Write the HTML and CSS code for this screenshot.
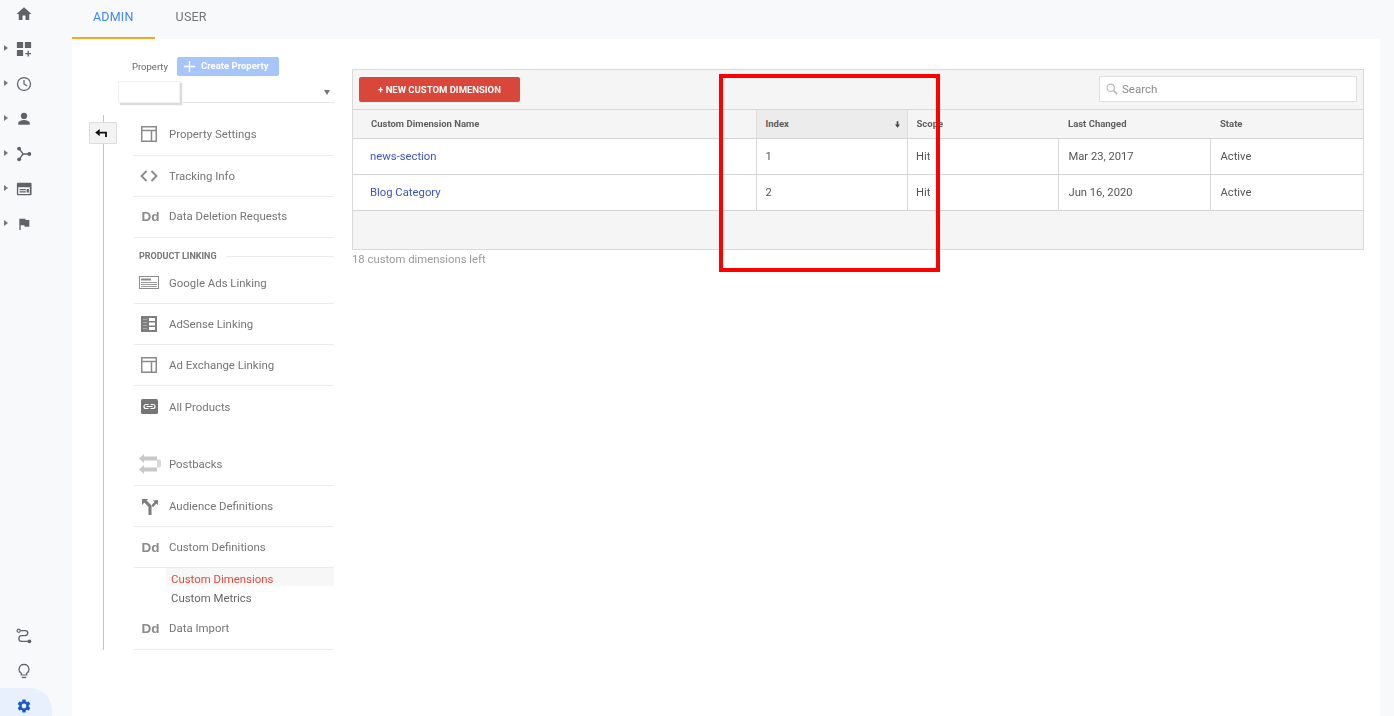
FILE: index.html
```html
<!DOCTYPE html>
<html lang="en">
<head>
<meta charset="utf-8">
<title>Custom Dimensions</title>
<link rel="stylesheet" href="styles.css">
</head>
<body>
<div class="app">
  <aside class="rail">
    <div class="rail-top">
      <div class="rail-row rail-home">
        <svg class="rail-icon" viewBox="0 0 24 24"><path d="M10 20v-6h4v6h5v-8h3L12 3 2 12h3v8z"/></svg>
      </div>
      <div class="rail-row"><span class="caret"></span>
        <svg class="rail-icon" viewBox="0 0 18 18"><path d="M1 1h7v7H1zM10 1h7v7h-7zM1 10h7v7H1zM13 11h1.500v2.500H17V15h-2.500v2.500H13V15h-2.500v-1.500H13z"/></svg>
      </div>
      <div class="rail-row"><span class="caret"></span>
        <svg class="rail-icon" viewBox="0 0 18 18"><circle cx="9" cy="9" r="7.300" fill="none" stroke="#5f6368" stroke-width="1.400"/><path d="M9 4.500V9l3.500 2.300" fill="none" stroke="#5f6368" stroke-width="1.400"/></svg>
      </div>
      <div class="rail-row"><span class="caret"></span>
        <svg class="rail-icon" viewBox="0 0 18 18"><circle cx="9" cy="5.500" r="3.500"/><path d="M2.500 15.500v-2c0-2.500 4.500-3.500 6.500-3.500s6.500 1 6.500 3.500v2z"/></svg>
      </div>
      <div class="rail-row"><span class="caret"></span>
        <svg class="rail-icon" viewBox="0 0 18 18"><circle cx="3.500" cy="3" r="2.200"/><circle cx="3.500" cy="15" r="2.200"/><circle cx="15" cy="9" r="2.200"/><path d="M3.500 3L8 9H15M8 9L3.500 15" fill="none" stroke="#5f6368" stroke-width="1.500"/></svg>
      </div>
      <div class="rail-row"><span class="caret"></span>
        <svg class="rail-icon" viewBox="0 0 18 18"><path fill-rule="evenodd" d="M2 2h14.500a1 1 0 0 1 1 1v12a1 1 0 0 1-1 1H2a1 1 0 0 1-1-1V3a1 1 0 0 1 1-1zM2.500 7v7.500h13V7zM4 9h7v1.500H4zM12 9h2.500v4H12zM4 11.500h7V13H4z"/></svg>
      </div>
      <div class="rail-row"><span class="caret"></span>
        <svg class="rail-icon" viewBox="0 0 24 24"><path d="M14.400 6L14 4H5v17h2v-7h5.600l.4 2h7V6z"/></svg>
      </div>
    </div>
    <div class="rail-bottom">
      <div class="rail-row">
        <svg class="rail-icon" viewBox="0 0 18 18"><circle cx="3" cy="3" r="1.800" fill="none" stroke="#5f6368" stroke-width="1.300"/><circle cx="15" cy="15" r="2.200"/><path d="M5 3h5.500a2.700 2.700 0 0 1 0 5.500h-4a2.700 2.700 0 0 0 0 6.500H13" fill="none" stroke="#5f6368" stroke-width="1.500"/></svg>
      </div>
      <div class="rail-row">
        <svg class="rail-icon" viewBox="0 0 18 18"><path d="M9 1.500a5.500 5.500 0 0 0-3 10.100V13.500h6v-1.900A5.500 5.500 0 0 0 9 1.500z" fill="none" stroke="#5f6368" stroke-width="1.400"/><path d="M6.500 15.500h5V17h-5z"/></svg>
      </div>
      <div class="rail-active">
        <svg class="rail-icon gear" viewBox="0 0 24 24"><path d="M19.140 12.940c.04-.3.060-.61.060-.94 0-.32-.020-.64-.070-.94l2.030-1.580a.49.49 0 0 0 .12-.61l-1.920-3.320a.488.488 0 0 0-.59-.22l-2.390.96c-.5-.38-1.030-.7-1.620-.94l-.36-2.540a.484.484 0 0 0-.48-.41h-3.840c-.24 0-.43.170-.47.410l-.36 2.540c-.59.240-1.130.57-1.620.94l-2.390-.96c-.22-.080-.47 0-.59.220L2.740 8.870c-.12.210-.080.470.12.610l2.030 1.580c-.05.300-.09.630-.09.940s.020.640.070.940l-2.030 1.580a.49.49 0 0 0-.12.610l1.920 3.320c.12.220.370.290.590.220l2.390-.96c.5.380 1.030.7 1.620.94l.36 2.540c.05.240.24.410.48.410h3.840c.24 0 .44-.170.47-.41l.36-2.540c.59-.240 1.130-.56 1.620-.94l2.390.96c.22.080.47 0 .59-.220l1.920-3.320c.12-.220.070-.470-.12-.610l-2.010-1.580zM12 15.600A3.600 3.600 0 1 1 12 8.400a3.600 3.600 0 0 1 0 7.200z"/></svg>
      </div>
    </div>
  </aside>

  <div class="main">
    <nav class="tabs">
      <a class="tab tab-active">ADMIN</a>
      <a class="tab">USER</a>
    </nav>
    <div class="panel">
      <section class="sidebar">
        <div class="prop-row">
          <span class="prop-label">Property</span>
          <span class="prop-btn"><svg class="plus" viewBox="0 0 12 12"><path d="M5.300 0h1.400v5.300H12v1.400H6.700V12H5.300V6.700H0V5.300h5.300z"/></svg>Create Property</span>
        </div>
        <div class="prop-select">
          <span class="redact"></span>
          <span class="select-caret"></span>
        </div>
        <div class="nav-wrap">
          <button class="back" type="button" aria-label="Back"><svg viewBox="0 0 14 10" width="13" height="9"><path d="M5 0L0 4l5 4V5h6v4h2V3H5z"/></svg></button>
          <ul class="nav-list">
            <li class="nav-item nav-up"><span class="nav-icon"><svg viewBox="0 0 16 16" width="16" height="16"><path class="ol" d="M.75.75h14.500v14.500H.75zM.75 4.500h14.500M10.500 4.500v10.750"/></svg></span>Property Settings</li>
            <li class="nav-item"><span class="nav-icon"><svg viewBox="0 0 18 12" width="18" height="12"><path class="ol ol-thick" d="M6.500 1L1.500 6l5 5M11.500 1l5 5-5 5"/></svg></span>Tracking Info</li>
            <li class="nav-item nav-up"><span class="nav-icon nav-dd">Dd</span>Data Deletion Requests</li>
            <li class="nav-heading"><span>PRODUCT LINKING</span></li>
            <li class="nav-item"><span class="nav-icon"><svg viewBox="0 0 20 13" width="20" height="13"><path d="M0 0h20v13H0z" fill="#8a8a8a"/><path d="M1 1h18v11H1z" fill="#fff"/><path d="M2 2.500h10v2H2z" fill="#8a8a8a"/><path d="M2 6h16v1H2zM2 8h16v1H2zM2 10h16v1H2z" fill="#9a9a9a"/></svg></span>Google Ads Linking</li>
            <li class="nav-item"><span class="nav-icon"><svg viewBox="0 0 16 16" width="16" height="16"><path d="M0 0h16v16H0z" fill="#7d7d7d"/><path d="M8 2h6v3H8zM8 6.500h6v3H8zM8 11h6v3H8z" fill="#fff"/><path d="M2 3h4v1H2zM2 6h4v1H2zM2 9h4v1H2zM2 12h4v1H2z" fill="#aaa"/></svg></span>AdSense Linking</li>
            <li class="nav-item"><span class="nav-icon"><svg viewBox="0 0 16 16" width="16" height="16"><path class="ol" d="M.75.75h14.500v14.500H.75zM.75 4.500h14.500M10.500 4.500v10.750"/></svg></span>Ad Exchange Linking</li>
            <li class="nav-item nav-plain"><span class="nav-icon"><svg viewBox="0 0 17 15" width="17" height="15"><rect width="17" height="15" rx="1.500" fill="#757575"/><path d="M7.500 5.500H5a2 2 0 0 0 0 4h2.500M9.500 5.500H12a2 2 0 0 1 0 4H9.500M5.500 7.500h6" fill="none" stroke="#fff" stroke-width="1.200"/></svg></span>All Products</li>
            <li class="nav-item nav-postbacks nav-up"><span class="nav-icon"><svg viewBox="0 0 22 22" width="22" height="22"><path d="M5 1v2.500h13v4H5V10L0 5.500zM5 12v2.500h13v4H5V21L0 16.500z" fill="#c8c8c8"/><path d="M18 6.500h2a2 2 0 0 1 2 2v4a2 2 0 0 1-2 2h-2z" fill="#d8d8d8"/></svg></span>Postbacks</li>
            <li class="nav-item"><span class="nav-icon nav-shift"><svg viewBox="0 0 16 16" width="16" height="16"><path d="M0 0h6L4.600 1.500 9.500 6.500V16h-3V8L2.500 3.600 0 6z" fill="#7d7d7d"/><path d="M16 1v5l-1.500-1.500-3.500 3.700-1.600-2L12.500 3 11 1.500z" fill="#7d7d7d"/></svg></span>Audience Definitions</li>
            <li class="nav-item"><span class="nav-icon nav-dd">Dd</span>Custom Definitions</li>
            <li class="nav-sub">
              <a class="sub-link sub-active">Custom Dimensions</a>
              <a class="sub-link">Custom Metrics</a>
            </li>
            <li class="nav-item nav-up"><span class="nav-icon nav-dd">Dd</span>Data Import</li>
          </ul>
        </div>
      </section>

      <section class="content">
        <div class="card">
          <div class="toolbar">
            <button class="new-btn" type="button">+ NEW CUSTOM DIMENSION</button>
            <label class="search">
              <svg viewBox="0 0 14 14" width="12" height="12"><circle cx="5.500" cy="5.500" r="4.300" fill="none" stroke="#bbb" stroke-width="1.400"/><path d="M8.800 8.800L13 13" stroke="#bbb" stroke-width="2"/></svg>
              <span>Search</span>
            </label>
          </div>
          <table class="grid">
            <colgroup><col class="c1"><col class="c2"><col class="c3"><col class="c4"><col class="c5"></colgroup>
            <thead>
              <tr>
                <th>Custom Dimension Name</th>
                <th class="sorted">Index<span class="sort-arrow"><svg viewBox="0 0 6 8" width="5" height="7"><path d="M2 0h2v4h2L3 8 0 4h2z"/></svg></span></th>
                <th>Scope</th>
                <th>Last Changed</th>
                <th>State</th>
              </tr>
            </thead>
            <tbody>
              <tr>
                <td class="name"><a>news-section</a></td>
                <td>1</td><td>Hit</td><td>Mar 23, 2017</td><td>Active</td>
              </tr>
              <tr>
                <td class="name"><a>Blog Category</a></td>
                <td>2</td><td>Hit</td><td>Jun 16, 2020</td><td>Active</td>
              </tr>
            </tbody>
          </table>
          <div class="card-foot"></div>
        </div>
        <p class="left-note">18 custom dimensions left</p>
      </section>
    </div>
  </div>
</div>
<div class="annotation"></div>
</body>
</html>
```

FILE: styles.css
```css
* { box-sizing: border-box; }
html, body { margin: 0; height: 716px; overflow: hidden; }
body {
  position: relative;
  background: #f8f9fb;
  font-family: Roboto, "Liberation Sans", sans-serif;
  font-size: 12px;
  color: #757575;
}
ul { list-style: none; margin: 0; padding: 0; }
p { margin: 0; }

.app { display: flex; height: 716px; filter: blur(0.3px); }

/* Left rail */
.rail {
  width: 72px;
  flex: none;
  display: flex;
  flex-direction: column;
  justify-content: space-between;
  height: 716px;
}
.rail-row {
  position: relative;
  height: 35px;
  display: flex;
  align-items: center;
  justify-content: center;
  width: 48px;
}
.rail-home { height: 28px; margin-bottom: 3px; }
.rail-icon { width: 16px; height: 16px; fill: #5f6368; }
.rail-home .rail-icon { width: 18px; height: 18px; }
.caret {
  position: absolute;
  left: 4px;
  top: 14px;
  width: 0;
  height: 0;
  border-left: 4px solid #777;
  border-top: 3.5px solid transparent;
  border-bottom: 3.5px solid transparent;
}
.rail-bottom { display: flex; flex-direction: column; }
.rail-active {
  width: 52px;
  height: 28px;
  padding: 10px 0 0 16px;
  background: #e8f0fe;
  border-top-right-radius: 22px;
}
.rail-active .gear { display: block; width: 16px; height: 16px; fill: #1a56c4; }

/* Tabs */
.main { width: 1308px; display: flex; flex-direction: column; }
.tabs { height: 39px; display: flex; flex: none; }
.tab {
  padding: 0 21px;
  height: 39px;
  line-height: 34px;
  font-size: 12.5px;
  letter-spacing: 0.2px;
  color: #757575;
}
.tab-active {
  color: #4285f4;
  border-bottom: 2px solid #f5a623;
}

/* Panel */
.panel { flex: 1; background: #fff; display: flex; }
.sidebar { width: 280px; flex: none; position: relative; }

.prop-row {
  display: flex;
  align-items: center;
  height: 19px;
  margin: 18px 0 0 60px;
}
.prop-label { font-size: 9.5px; color: #666; width: 45px; margin-top: -1px; }
.prop-btn {
  width: 102px;
  height: 19px;
  display: flex;
  align-items: center;
  padding: 0 0 2px 7px;
  background: #a6c5fa;
  border-radius: 2px;
  color: #fff;
  font-size: 9.5px;
  font-weight: 700;
}
.plus { width: 11px; height: 11px; fill: #fff; margin: 2px 6px 0 0; }

.prop-select {
  position: relative;
  height: 27px;
  margin-left: 46px;
  width: 216px;
  border-bottom: 1px solid #e4e4e4;
}
.redact {
  position: absolute;
  left: 0;
  top: 5px;
  width: 62px;
  height: 22px;
  background: #fff;
  border: 1px solid #f0f0f0;
  box-shadow: 2px 2px 1px #dcdcdc;
}
.select-caret {
  position: absolute;
  right: 4px;
  top: 14px;
  border-top: 5px solid #777;
  border-left: 3.5px solid transparent;
  border-right: 3.5px solid transparent;
}

.nav-wrap {
  position: relative;
  margin: 12px 0 0 31px;
  width: 231px;
  padding-left: 30px;
  border-left: 1px solid #c4c4c4;
}
.back {
  position: absolute;
  left: -15px;
  top: 7px;
  width: 28px;
  height: 22px;
  padding: 0 3px 0 0;
  display: flex;
  align-items: center;
  justify-content: center;
  background: #f3f3f3;
  border: 1px solid #dcdcdc;
  border-radius: 1px;
}
.back svg { fill: #111; }

.nav-item {
  display: flex;
  align-items: center;
  height: 41px;
  padding-bottom: 1px;
  border-bottom: 1px solid #ececec;
  font-size: 11.4px;
  color: #757575;
}
.nav-up { padding-bottom: 3px; }
.nav-plain { border-bottom: 0; margin-bottom: 18px; padding-bottom: 0; }
.nav-icon {
  width: 35px;
  flex: none;
  display: flex;
  justify-content: center;
  padding-right: 5px;
}
.ol { fill: none; stroke: #8a8a8a; stroke-width: 1.500; }
.ol-thick { stroke-width: 1.900; }
.nav-dd {
  padding-right: 2px;
  margin-top: 2px;
  font-family: "Liberation Sans", Arial, sans-serif;
  font-size: 13.5px;
  font-weight: 700;
  color: #8a8a8a;
}
.nav-shift { padding-right: 3px; margin-top: 2px; }
.nav-postbacks .nav-icon { padding-right: 4px; justify-content: flex-start; padding-left: 5px; }

.nav-heading {
  height: 25px;
  padding: 12px 0 0 5px;
  display: flex;
  align-items: center;
  font-size: 9px;
  font-weight: 700;
  color: #757575;
  line-height: 13px;
}
.nav-heading::after {
  content: "";
  flex: 1;
  height: 1px;
  margin-left: 9px;
  background: #ececec;
}

.nav-sub { height: 41px; padding-left: 32px; display: flex; flex-direction: column; }
.sub-link {
  display: block;
  height: 18px;
  line-height: 22px;
  padding-left: 5px;
  font-size: 11.4px;
  color: #666;
}
.sub-link + .sub-link { line-height: 24px; }
.sub-active { background: #f7f7f7; color: #e24a3b; }

/* Content */
.content { flex: none; width: 1012px; padding-top: 30px; }
.card { border: 1px solid #d9d9d9; background: #f5f5f5; }
.toolbar {
  height: 40px;
  display: flex;
  justify-content: space-between;
  align-items: flex-start;
  padding: 6px 6px 0 6px;
  border-bottom: 1px solid #d9d9d9;
}
.new-btn {
  width: 161px;
  height: 25px;
  margin-top: 1px;
  padding: 0;
  border: 0;
  border-radius: 2px;
  background: #d9473a;
  color: #fff;
  font-family: inherit;
  font-size: 9.5px;
  font-weight: 700;
}
.search {
  width: 258px;
  height: 26px;
  display: flex;
  align-items: center;
  gap: 4px;
  padding-left: 6px;
  background: #fff;
  border: 1px solid #dfdfdf;
  font-size: 11.5px;
  color: #8a8a8a;
}

.grid { width: 1010px; border-collapse: collapse; table-layout: fixed; background: #fff; }
.c1 { width: 403px; }
.c2, .c3 { width: 151px; }
.c4 { width: 152px; }
.grid th {
  height: 28px;
  padding: 0 9px;
  background: #f5f5f5;
  border-bottom: 1px solid #d4d4d4;
  border-left: 0;
  text-align: left;
  font-size: 9.5px;
  font-weight: 700;
  color: #5f5f5f;
}
.grid th:first-child { padding-left: 18px; }
.grid th.sorted {
  position: relative;
  background: #ececec;
  border-left: 1px solid #dcdcdc;
  border-right: 1px solid #dcdcdc;
}
.sort-arrow { position: absolute; right: 7px; top: 11px; line-height: 0; }
.sort-arrow svg { fill: #444; }
.grid td {
  height: 36px;
  padding: 0 9px;
  border-bottom: 1px solid #d4d4d4;
  border-left: 1px solid #d8d8d8;
  font-size: 11.2px;
  color: #555;
}
.grid td:nth-child(3) { padding-left: 8.5px; }
.grid th:nth-child(4), .grid td:nth-child(4),
.grid th:nth-child(5), .grid td:nth-child(5) { padding-left: 10px; }
.grid td.name { border-left: 0; padding-left: 17px; font-size: 11.3px; }
.name a { color: #3a55c4; }

.card-foot { height: 38px; background: #f5f5f5; }
.left-note { margin-top: 3px; font-size: 11.3px; color: #9a9a9a; }

/* Hand-drawn annotation over the screenshot */
.annotation {
  position: absolute;
  left: 719px;
  top: 74px;
  width: 221px;
  height: 198px;
  border: 4px solid #f00;
  pointer-events: none;
}
```
